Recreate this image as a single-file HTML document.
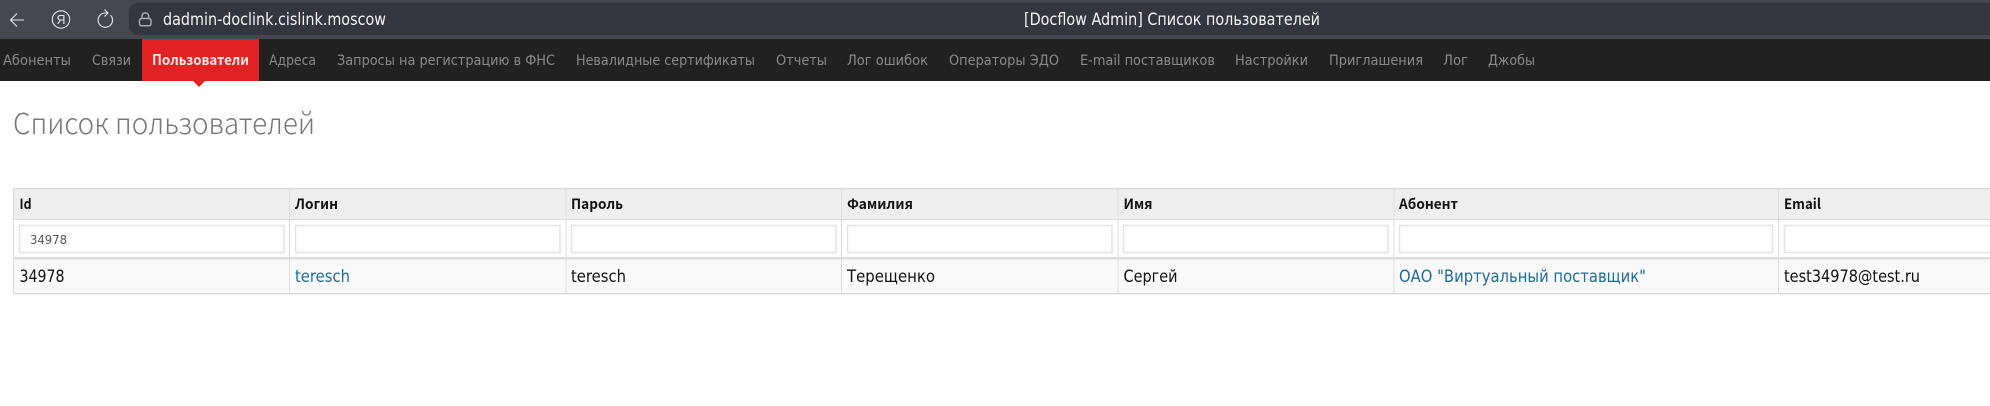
<!DOCTYPE html>
<html lang="ru">
<head>
<meta charset="utf-8">
<title>[Docflow Admin] Список пользователей</title>
<style>
html,body{margin:0;padding:0;background:#fff;width:1990px;height:406px;overflow:hidden}
svg{display:block;font-family:"DejaVu Sans","Liberation Sans",sans-serif}
.n{font-size:14.5px;fill:#8a8a8a}
.h{font-size:14px;font-weight:bold;fill:#111;font-family:"Noto Sans CJK SC","DejaVu Sans",sans-serif}
.d{font-size:16.5px;fill:#111}
.l{font-size:16.5px;fill:#1f6c99}
.i{fill:#fff;stroke:#e3e3e3;stroke-width:1.5}
</style>
</head>
<body>
<svg width="1990" height="406" viewBox="0 0 1990 406" xmlns="http://www.w3.org/2000/svg">
<rect width="1990" height="406" fill="#fff"/>
<!-- browser bar -->
<rect width="1990" height="39" fill="#464651"/>
<rect x="129" y="3" width="1880" height="32" rx="9" fill="#35353f"/>
<g fill="none" stroke="#e8e8ea" stroke-width="1.1">
<path d="M24 20H10.5M17 13.5L10.5 20L17 26.5"/>
<circle cx="61" cy="19.5" r="8.7"/>
<path d="M110.6 15.2A7.2 7.2 0 1 1 104 13H108M104.5 9.5L108 13L104.5 16.5"/>
</g>
<text x="56.5" y="24" font-size="13" fill="#e8e8ea" textLength="9" lengthAdjust="spacingAndGlyphs" style="font-family:'Liberation Sans',sans-serif">Я</text>
<g fill="none" stroke="#a9a9b0" stroke-width="1.5">
<rect x="139.5" y="18.5" width="11.5" height="7.2" rx="2"/>
<path d="M142 18.5V15.5A3.4 3.4 0 0 1 148.6 15.5V18.5"/>
</g>
<text x="163" y="25" font-size="17" fill="#f5f5f6" textLength="223" lengthAdjust="spacingAndGlyphs">dadmin-doclink.cislink.moscow</text>
<text x="1024" y="25" font-size="17" fill="#f5f5f6" textLength="296" lengthAdjust="spacingAndGlyphs">[Docflow Admin] Список пользователей</text>
<!-- nav -->
<rect y="39" width="1990" height="42" fill="#212121"/>
<rect x="142" y="39" width="117" height="42" fill="#e22323"/>
<path d="M193 81H205L199 87Z" fill="#e22323"/>
<g>
<text class="n" x="3" y="65" textLength="68" lengthAdjust="spacingAndGlyphs">Абоненты</text>
<text class="n" x="92" y="65" textLength="39" lengthAdjust="spacingAndGlyphs">Связи</text>
<text x="152" y="65" font-size="14.5" font-weight="bold" fill="#f6e6e6" textLength="97" lengthAdjust="spacingAndGlyphs" style="font-family:'Noto Sans CJK SC','DejaVu Sans',sans-serif">Пользователи</text>
<text class="n" x="269" y="65" textLength="47" lengthAdjust="spacingAndGlyphs">Адреса</text>
<text class="n" x="337" y="65" textLength="218" lengthAdjust="spacingAndGlyphs">Запросы на регистрацию в ФНС</text>
<text class="n" x="576" y="65" textLength="179" lengthAdjust="spacingAndGlyphs">Невалидные сертификаты</text>
<text class="n" x="776" y="65" textLength="51" lengthAdjust="spacingAndGlyphs">Отчеты</text>
<text class="n" x="847" y="65" textLength="81" lengthAdjust="spacingAndGlyphs">Лог ошибок</text>
<text class="n" x="949" y="65" textLength="110" lengthAdjust="spacingAndGlyphs">Операторы ЭДО</text>
<text class="n" x="1080" y="65" textLength="135" lengthAdjust="spacingAndGlyphs">E-mail поставщиков</text>
<text class="n" x="1235" y="65" textLength="73" lengthAdjust="spacingAndGlyphs">Настройки</text>
<text class="n" x="1329" y="65" textLength="94" lengthAdjust="spacingAndGlyphs">Приглашения</text>
<text class="n" x="1443" y="65" textLength="25" lengthAdjust="spacingAndGlyphs">Лог</text>
<text class="n" x="1488" y="65" textLength="47" lengthAdjust="spacingAndGlyphs">Джобы</text>
</g>
<!-- heading -->
<text x="13" y="134" font-size="29" font-weight="300" fill="#777" textLength="302" lengthAdjust="spacingAndGlyphs" style="font-family:'Noto Sans CJK SC','DejaVu Sans',sans-serif">Список пользователей</text>
<!-- table -->
<rect x="14" y="189" width="1976" height="30.5" fill="#eee"/>
<rect x="14" y="259" width="1976" height="34" fill="#f9f9f9"/>
<g fill="#ddd">
<rect x="13" y="188" width="1977" height="1.5"/>
<rect x="13" y="219" width="1977" height="1"/>
<rect x="13" y="257" width="1977" height="2.5"/>
<rect x="13" y="293" width="1977" height="1.5"/>
<rect x="13" y="188" width="1" height="106"/>
<rect x="289" y="188" width="1" height="106"/>
<rect x="565.5" y="188" width="1" height="106"/>
<rect x="841" y="188" width="1" height="106"/>
<rect x="1117.5" y="188" width="1" height="106"/>
<rect x="1393.5" y="188" width="1" height="106"/>
<rect x="1778" y="188" width="1" height="106"/>
</g>
<text class="h" x="19.5" y="209" textLength="12" lengthAdjust="spacingAndGlyphs">Id</text>
<text class="h" x="295" y="209" textLength="43" lengthAdjust="spacingAndGlyphs">Логин</text>
<text class="h" x="571" y="209" textLength="52" lengthAdjust="spacingAndGlyphs">Пароль</text>
<text class="h" x="847" y="209" textLength="66" lengthAdjust="spacingAndGlyphs">Фамилия</text>
<text class="h" x="1123.5" y="209" textLength="29" lengthAdjust="spacingAndGlyphs">Имя</text>
<text class="h" x="1399" y="209" textLength="59" lengthAdjust="spacingAndGlyphs">Абонент</text>
<text class="h" x="1784" y="209" textLength="37" lengthAdjust="spacingAndGlyphs">Email</text>
<rect class="i" x="19.5" y="225.5" width="264.5" height="27"/>
<rect class="i" x="295.5" y="225.5" width="264.5" height="27"/>
<rect class="i" x="571.5" y="225.5" width="264.5" height="27"/>
<rect class="i" x="847.5" y="225.5" width="264.5" height="27"/>
<rect class="i" x="1123.5" y="225.5" width="264.5" height="27"/>
<rect class="i" x="1399.5" y="225.5" width="373" height="27"/>
<rect class="i" x="1784.5" y="225.5" width="260" height="27"/>
<text x="30" y="244" font-size="12.5" fill="#555" textLength="37" lengthAdjust="spacingAndGlyphs">34978</text>
<text class="d" x="19.5" y="282" textLength="45" lengthAdjust="spacingAndGlyphs">34978</text>
<text class="l" x="295" y="282" textLength="55" lengthAdjust="spacingAndGlyphs">teresch</text>
<text class="d" x="571" y="282" textLength="55" lengthAdjust="spacingAndGlyphs">teresch</text>
<text class="d" x="847" y="282" textLength="88" lengthAdjust="spacingAndGlyphs">Терещенко</text>
<text class="d" x="1123.5" y="282" textLength="54" lengthAdjust="spacingAndGlyphs">Сергей</text>
<text class="l" x="1399" y="282" textLength="247" lengthAdjust="spacingAndGlyphs">ОАО "Виртуальный поставщик"</text>
<text class="d" x="1784" y="282" textLength="136" lengthAdjust="spacingAndGlyphs">test34978@test.ru</text>
</svg>
</body>
</html>
